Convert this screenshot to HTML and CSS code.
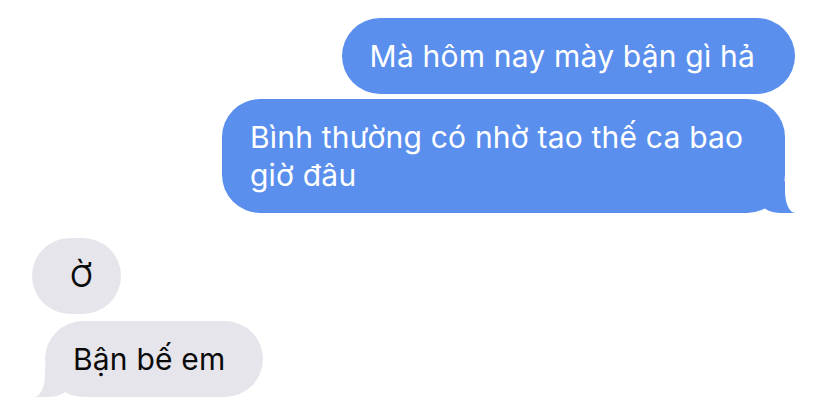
FILE: index.html
```
<!DOCTYPE html>
<html lang="vi">
<head>
    <meta charset="UTF-8">
    <meta name="viewport" content="width=device-width, initial-scale=1.0">
    <title>Tin nhắn</title>
    <link rel="stylesheet" href="styles.css">
</head>
<body>
    <div class="thread">
        <div class="bubble sent">Mà hôm nay mày bận gì hả</div>
        <div class="bubble sent tail">Bình thường có nhờ tao thế ca bao giờ đâu</div>
        <div class="bubble received short">Ờ</div>
        <div class="bubble received tail">Bận bế em</div>
    </div>
</body>
</html>
```
FILE: styles.css
```
/* Page */
body {
    margin: 0;
    background: #fff;
    font-family: 'Inter', 'Roboto', sans-serif;
    overflow: hidden;
}

/* Conversation */
.thread {
    display: flex;
    flex-direction: column;
    padding-top: 18px;
}

/* Bubbles */
.bubble {
    position: relative;
    box-sizing: border-box;
    max-width: 563px;
    padding: 19px 40px 19px 28px;
    border-radius: 38px;
    font-size: 30px;
    line-height: 38px;
    letter-spacing: 0.2px;
}

.sent {
    align-self: flex-end;
    margin-right: 33px;
    background: #5a8fee;
    color: #fff;
}

.sent + .sent {
    margin-top: 5px;
}

.sent.tail {
    margin-right: 43px;
    padding-right: 30px;
}

.received {
    align-self: flex-start;
    margin-left: 32px;
    padding: 19px 37px 19px 28px;
    background: #e6e5eb;
    color: #0a0a0a;
}

.received.short {
    padding: 19px 28px 19px 38px;
}

.sent + .received {
    margin-top: 25px;
}

.received + .received {
    margin-top: 7px;
}

.received.tail {
    margin-left: 45px;
}

/* Tails */
.tail::before,
.tail::after {
    content: "";
    position: absolute;
    bottom: 0;
    height: 32px;
}

.sent.tail::before {
    right: -10px;
    width: 36px;
    background: #5a8fee;
    border-bottom-left-radius: 22px 14px;
}

.sent.tail::after {
    right: -30px;
    width: 30px;
    background: #fff;
    border-bottom-left-radius: 10px 22px;
}

.received.tail::before {
    left: -11px;
    width: 36px;
    background: #e6e5eb;
    border-bottom-right-radius: 22px 14px;
}

.received.tail::after {
    left: -30px;
    width: 30px;
    background: #fff;
    border-bottom-right-radius: 11px 22px;
}
```
